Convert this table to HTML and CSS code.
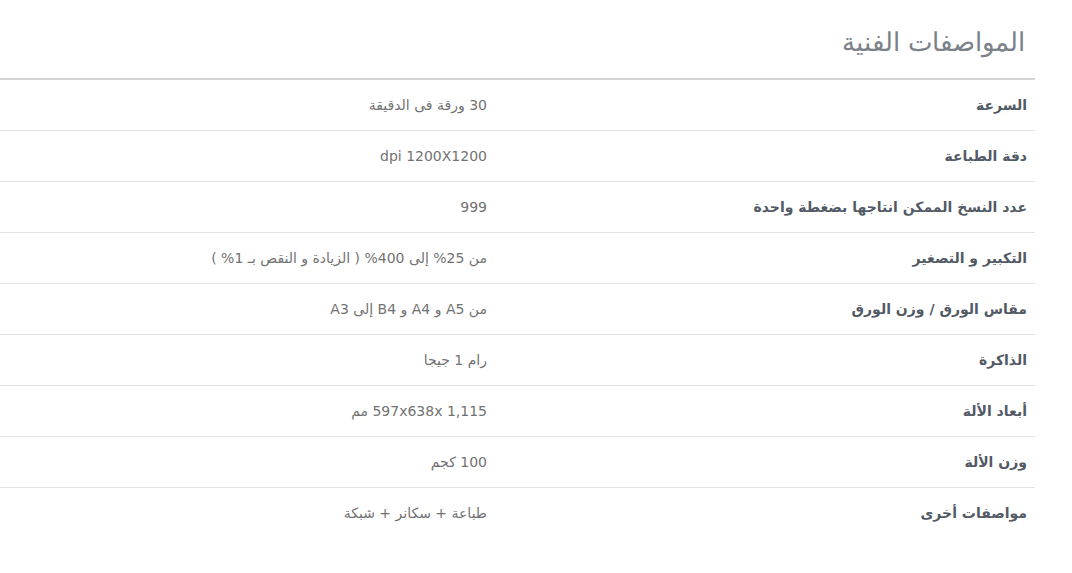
FILE: index.html
```html
<!DOCTYPE html>
<html lang="ar" dir="rtl">
<head>
<meta charset="utf-8">
<link rel="stylesheet" href="styles.css">
</head>
<body>
<div class="specs">
  <h2 class="title">المواصفات الفنية</h2>
  <table class="table">
    <tbody>
      <tr><th>السرعة</th><td>30 ورقة فى الدقيقة</td></tr>
      <tr><th>دقة الطباعة</th><td>dpi 1200X1200</td></tr>
      <tr><th>عدد النسخ الممكن انتاجها بضغطة واحدة</th><td>999</td></tr>
      <tr><th>التكبير و التصغير</th><td>من 25% إلى 400% ( الزيادة و النقص بـ 1% )</td></tr>
      <tr><th>مقاس الورق / وزن الورق</th><td>من A5 و A4 و B4 إلى A3</td></tr>
      <tr><th>الذاكرة</th><td>رام 1 جيجا</td></tr>
      <tr><th>أبعاد الألة</th><td>1,115 597x638x مم</td></tr>
      <tr><th>وزن الألة</th><td>100 كجم</td></tr>
      <tr class="last"><th>مواصفات أخرى</th><td>طباعة + سكانر + شبكة</td></tr>
    </tbody>
  </table>
</div>
</body>
</html>
```
FILE: styles.css
```css
html, body {
  margin: 0;
  padding: 0;
  background: #ffffff;
}
body {
  font-family: "DejaVu Sans", "Noto Sans", sans-serif;
}
.specs {
  width: 1035px;
  margin-left: auto;
  margin-right: 37px;
  padding-top: 25px;
}
.title {
  margin: 0;
  padding: 0 10px 18px 0;
  font-size: 26px;
  font-weight: 300;
  line-height: 35px;
  color: #7b8189;
  border-bottom: 2px solid #d3d3d3;
}
.table {
  width: 100%;
  border-collapse: collapse;
}
.table th, .table td {
  height: 50px;
  padding: 0 8px;
  text-align: right;
  vertical-align: middle;
  border-bottom: 1px solid #e1e1e6;
  font-size: 14px;
}
.table .last th, .table .last td {
  border-bottom: none;
}
.table th {
  width: 524px;
  font-weight: 600;
  color: #525a65;
}
.table td {
  font-weight: 400;
  color: #727272;
}
```
